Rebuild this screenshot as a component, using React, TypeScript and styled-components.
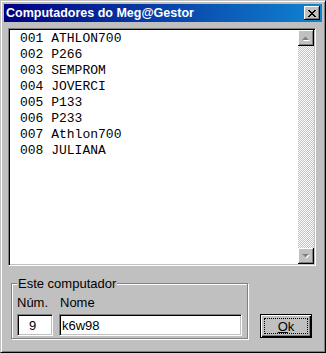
import styled, { createGlobalStyle } from "styled-components";

const GlobalStyle = createGlobalStyle`
  html, body {
    margin: 0;
    padding: 0;
    background: #c0c0c0;
  }
  * {
    box-sizing: border-box;
  }
`;

const COMPUTERS = [
  { num: "001", name: "ATHLON700" },
  { num: "002", name: "P266" },
  { num: "003", name: "SEMPROM" },
  { num: "004", name: "JOVERCI" },
  { num: "005", name: "P133" },
  { num: "006", name: "P233" },
  { num: "007", name: "Athlon700" },
  { num: "008", name: "JULIANA" },
];

function CloseIcon() {
  return (
    <svg width="8" height="7" viewBox="0 0 8 7" shapeRendering="crispEdges">
      <path d="M0 0h2v1h1v1h2V1h1V0h2v1H7v1H6v1H5v1h1v1h1v1h1v1H6V6H5V5H3v1H2v1H0V6h1V5h1V4h1V3H2V2H1V1H0z" fill="#000" />
    </svg>
  );
}

function Arrow({ down }: { down?: boolean }) {
  const pts = down ? "0,0 7,0 3.5,3.5" : "0,4 3.5,0.5 7,4";
  return (
    <svg width="8" height="5" viewBox="0 0 8 5" style={{ overflow: "visible" }}>
      <polygon points={pts} fill="#fff" transform="translate(1 1)" />
      <polygon points={pts} fill="#808080" />
    </svg>
  );
}

export default function App() {
  return (
    <>
      <GlobalStyle />
      <St.Window>
        <St.TitleBar>
          <St.Title>Computadores do Meg@Gestor</St.Title>
          <St.CloseBtn>
            <CloseIcon />
          </St.CloseBtn>
        </St.TitleBar>

        <St.Body>
          <St.ListBox>
            <St.List>
              {COMPUTERS.map((c) => (
                <St.Item key={c.num}>
                  {c.num} {c.name}
                </St.Item>
              ))}
            </St.List>
            <St.ScrollBar>
              <St.ScrollBtn>
                <Arrow />
              </St.ScrollBtn>
              <St.Track />
              <St.ScrollBtn>
                <Arrow down />
              </St.ScrollBtn>
            </St.ScrollBar>
          </St.ListBox>

          <St.Footer>
            <St.Group>
              <St.Legend>Este computador</St.Legend>
              <St.FieldGrid>
                <St.Label>Núm.</St.Label>
                <St.Label $shift>Nome</St.Label>
                <St.Input $num readOnly value="9" />
                <St.Input readOnly value="k6w98" />
              </St.FieldGrid>
            </St.Group>
            <St.OkBtn>
              <St.FocusRing>
                <u>O</u>k
              </St.FocusRing>
            </St.OkBtn>
          </St.Footer>
        </St.Body>
      </St.Window>
    </>
  );
}

const St = {
  Window: styled.div`
    width: 326px;
    height: 353px;
    display: flex;
    flex-direction: column;
    padding: 3px;
    background: #c0c0c0;
    border: 1px solid;
    border-color: #c0c0c0 #000 #000 #c0c0c0;
    box-shadow: inset 1px 1px 0 #fff, inset -1px -1px 0 #808080;
  `,

  TitleBar: styled.div`
    height: 18px;
    display: flex;
    align-items: center;
    justify-content: space-between;
    padding: 0 2px 0 2px;
    background: linear-gradient(to right, #000080, #1084d0);
  `,

  Title: styled.span`
    font-family: "Liberation Sans", Arial, sans-serif;
    font-weight: bold;
    font-size: 12.5px;
    color: #fff;
    white-space: nowrap;
  `,

  CloseBtn: styled.div`
    width: 16px;
    height: 14px;
    display: flex;
    align-items: center;
    justify-content: center;
    background: #c0c0c0;
    box-shadow: inset -1px -1px 0 #000, inset 1px 1px 0 #fff, inset -2px -2px 0 #808080;
  `,

  Body: styled.div`
    flex: 1;
    display: flex;
    flex-direction: column;
    padding: 6px 6px 10px 4px;
  `,

  ListBox: styled.div`
    height: 238px;
    display: flex;
    background: #fff;
    border: 1px solid;
    border-color: #808080 #fff #fff #808080;
    box-shadow: inset 1px 1px 0 #000, inset -1px -1px 0 #c0c0c0;
    padding: 1px;
  `,

  List: styled.div`
    flex: 1;
    padding: 1px 0 0 10px;
  `,

  Item: styled.div`
    font-family: "Liberation Mono", "Courier New", monospace;
    font-size: 13px;
    line-height: 16px;
    color: #000;
    white-space: pre;
  `,

  ScrollBar: styled.div`
    width: 16px;
    display: flex;
    flex-direction: column;
  `,

  ScrollBtn: styled.div`
    height: 16px;
    display: flex;
    align-items: center;
    justify-content: center;
    background: #c0c0c0;
    box-shadow: inset -1px -1px 0 #000, inset 1px 1px 0 #fff, inset -2px -2px 0 #808080;
  `,

  Track: styled.div`
    flex: 1;
    background: repeating-conic-gradient(#c0c0c0 0% 25%, #fff 0% 50%) 0 0 / 2px 2px;
  `,

  Footer: styled.div`
    display: flex;
    align-items: flex-end;
    gap: 12px;
    margin-top: 10px;
    padding-left: 3px;
  `,

  Group: styled.fieldset`
    width: 237px;
    margin: 0;
    padding: 0 4px 2px 5px;
    border: 1px solid #808080;
    box-shadow: inset 1px 1px 0 #fff, 1px 1px 0 #fff;
  `,

  Legend: styled.legend`
    padding: 0 1px;
    font-family: "Liberation Sans", Arial, sans-serif;
    font-size: 13px;
    line-height: 15px;
    color: #000;
    background: #c0c0c0;
  `,

  FieldGrid: styled.div`
    display: grid;
    grid-template-columns: 36px 183px;
    column-gap: 6px;
    row-gap: 4px;
    margin-top: 4px;
  `,

  Label: styled.span<{ $shift?: boolean }>`
    font-family: "Liberation Sans", Arial, sans-serif;
    font-size: 13px;
    line-height: 15px;
    color: #000;
    padding-left: ${({ $shift }) => ($shift ? "1px" : "0")};
  `,

  Input: styled.input<{ $num?: boolean }>`
    height: 22px;
    width: 100%;
    margin: 0;
    padding: 0 0 0 ${({ $num }) => ($num ? "11px" : "2px")};
    font-family: "Liberation Sans", Arial, sans-serif;
    font-size: 13px;
    color: #000;
    background: #fff;
    outline: none;
    border: 1px solid;
    border-color: #808080 #fff #fff #808080;
    box-shadow: inset 1px 1px 0 #000, inset -1px -1px 0 #c0c0c0;
  `,

  OkBtn: styled.button`
    width: 52px;
    height: 24px;
    margin: 0 0 1px 0;
    padding: 3px;
    display: flex;
    background: #c0c0c0;
    border: 1px solid #000;
    box-shadow: inset 1px 1px 0 #fff, inset -1px -1px 0 #000, inset -2px -2px 0 #808080;
  `,

  FocusRing: styled.span`
    flex: 1;
    display: flex;
    align-items: center;
    justify-content: center;
    border: 1px dotted #000;
    font-family: "Liberation Sans", Arial, sans-serif;
    font-size: 13px;
    color: #000;
  `,
};
